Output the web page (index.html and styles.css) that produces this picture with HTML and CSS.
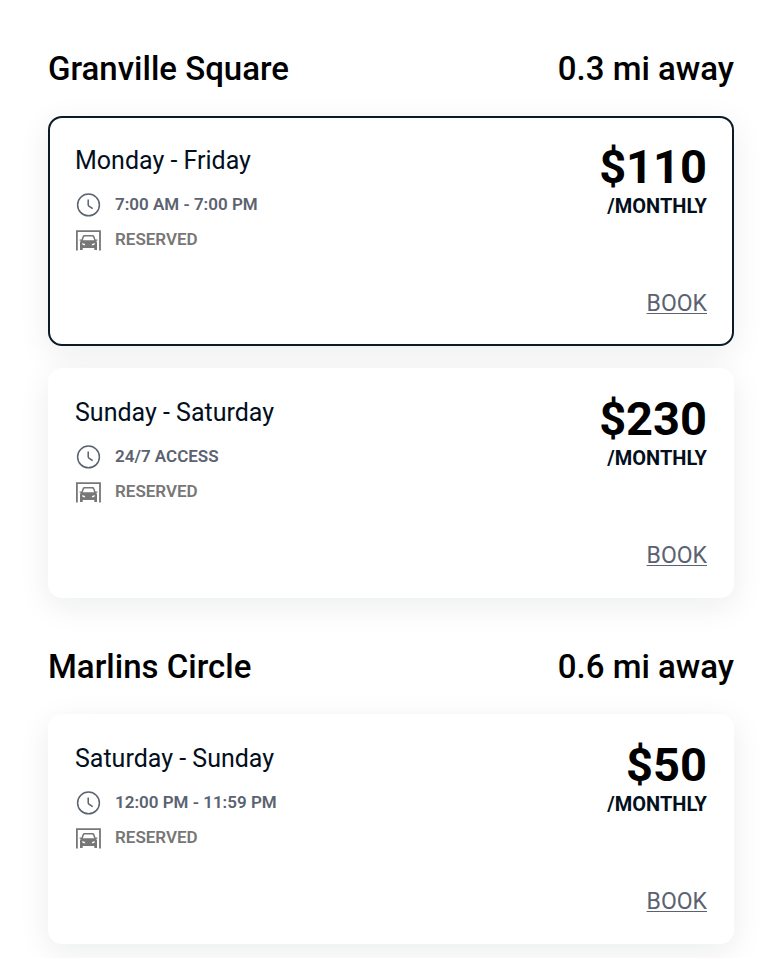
FILE: index.html
```html
<!DOCTYPE html>
<html lang="en">
<head>
<meta charset="utf-8">
<meta name="viewport" content="width=device-width, initial-scale=1">
<title>Parking nearby</title>
<link rel="stylesheet" href="styles.css">
</head>
<body>
<svg class="sprite" aria-hidden="true">
  <symbol id="clock" viewBox="0 0 26 26">
    <circle cx="13.5" cy="13.9" r="10.900" fill="none" stroke="currentColor" stroke-width="1.5"/>
    <path d="M13.200 8.600v5.200q0 .8.700 1.300l3.800 2.600" fill="none" stroke="currentColor" stroke-width="1.5"/>
  </symbol>
  <symbol id="garage" viewBox="0 0 26 26">
    <path d="M1.900 24.500V5.100h23.100V24.500" fill="none" stroke="currentColor" stroke-width="1.8"/>
    <path fill="currentColor" fill-rule="evenodd" d="M9.300 9h8.400q1.200 0 1.600 1.100l1.200 3.300h1.900v1.400h-1.300q.9.800.9 2V24h-2.700v-2H7.700v2H5v-7.200q0-1.200.9-2H4.600v-1.400h1.900l1.200-3.300Q8.100 9 9.300 9zM9.700 10.500q-.5 0-.7.500l-1.200 3.300h11.400L18 11q-.2-.5-.7-.5zM7 17.300q0 2 3.300 2 0-2-3.300-2zM20 17.300q-3.300 0-3.300 2 3.300 0 3.300-2z"/>
  </symbol>
</svg>
<main class="listings">
  <section class="lot">
    <header class="lot-header"><h2>Granville Square</h2><p>0.3 mi away</p></header>
    <article class="card selected">
      <div class="details">
        <h3>Monday - Friday</h3>
        <p class="hours"><svg class="icon"><use href="#clock"/></svg>7:00 AM - 7:00 PM</p>
        <p class="type"><svg class="icon"><use href="#garage"/></svg>RESERVED</p>
      </div>
      <div class="pricing"><p class="price">$110</p><p class="period">/MONTHLY</p><a class="book" href="#">BOOK</a></div>
    </article>
    <article class="card">
      <div class="details">
        <h3>Sunday - Saturday</h3>
        <p class="hours"><svg class="icon"><use href="#clock"/></svg>24/7 ACCESS</p>
        <p class="type"><svg class="icon"><use href="#garage"/></svg>RESERVED</p>
      </div>
      <div class="pricing"><p class="price">$230</p><p class="period">/MONTHLY</p><a class="book" href="#">BOOK</a></div>
    </article>
  </section>
  <section class="lot">
    <header class="lot-header"><h2>Marlins Circle</h2><p>0.6 mi away</p></header>
    <article class="card">
      <div class="details">
        <h3>Saturday - Sunday</h3>
        <p class="hours"><svg class="icon"><use href="#clock"/></svg>12:00 PM - 11:59 PM</p>
        <p class="type"><svg class="icon"><use href="#garage"/></svg>RESERVED</p>
      </div>
      <div class="pricing"><p class="price">$50</p><p class="period">/MONTHLY</p><a class="book" href="#">BOOK</a></div>
    </article>
  </section>
</main>
</body>
</html>
```
FILE: styles.css
```css
* { box-sizing: border-box; }
html { overflow-x: hidden; scrollbar-width: none; }
body { margin: 0; background: #fff; color: #000; font-family: Roboto, "Liberation Sans", sans-serif; }
h2, h3, p { margin: 0; }
.sprite { display: none; }
.listings { padding: 49px 32px 14px 48px; }
.lot + .lot { margin-top: 49px; }
.lot-header { display: flex; justify-content: space-between; margin-bottom: 27px; font-size: 33px; line-height: 40px; font-weight: 500; }
.lot-header h2, .lot-header p { font: inherit; }
.card { display: flex; justify-content: space-between; min-height: 230px; padding: 27px 25px; border: 2px solid transparent; border-radius: 14px; background: #fff; box-shadow: 0 8px 32px rgba(0, 20, 30, 0.08); }
.card + .card { margin-top: 22px; }
.card.selected { border-color: #0b1a27; }
h3 { margin-bottom: 11px; font-size: 25px; line-height: 32px; font-weight: 400; color: #030f1c; }
.details p { display: flex; align-items: center; gap: 14px; height: 32px; font-size: 17px; font-weight: 600; color: #5b6270; }
.details .type { margin-top: 3px; color: #777; }
.icon { width: 26px; height: 26px; }
.pricing { display: flex; flex-direction: column; align-items: flex-end; }
.price { font-size: 47px; line-height: 44px; font-weight: 700; }
.period { margin-top: 5px; font-size: 20px; line-height: 24px; font-weight: 700; color: #030f1c; }
.book { margin-top: auto; font-size: 23px; line-height: 26px; color: #5b6270; text-decoration-thickness: 1px; text-underline-offset: 2px; }
```
